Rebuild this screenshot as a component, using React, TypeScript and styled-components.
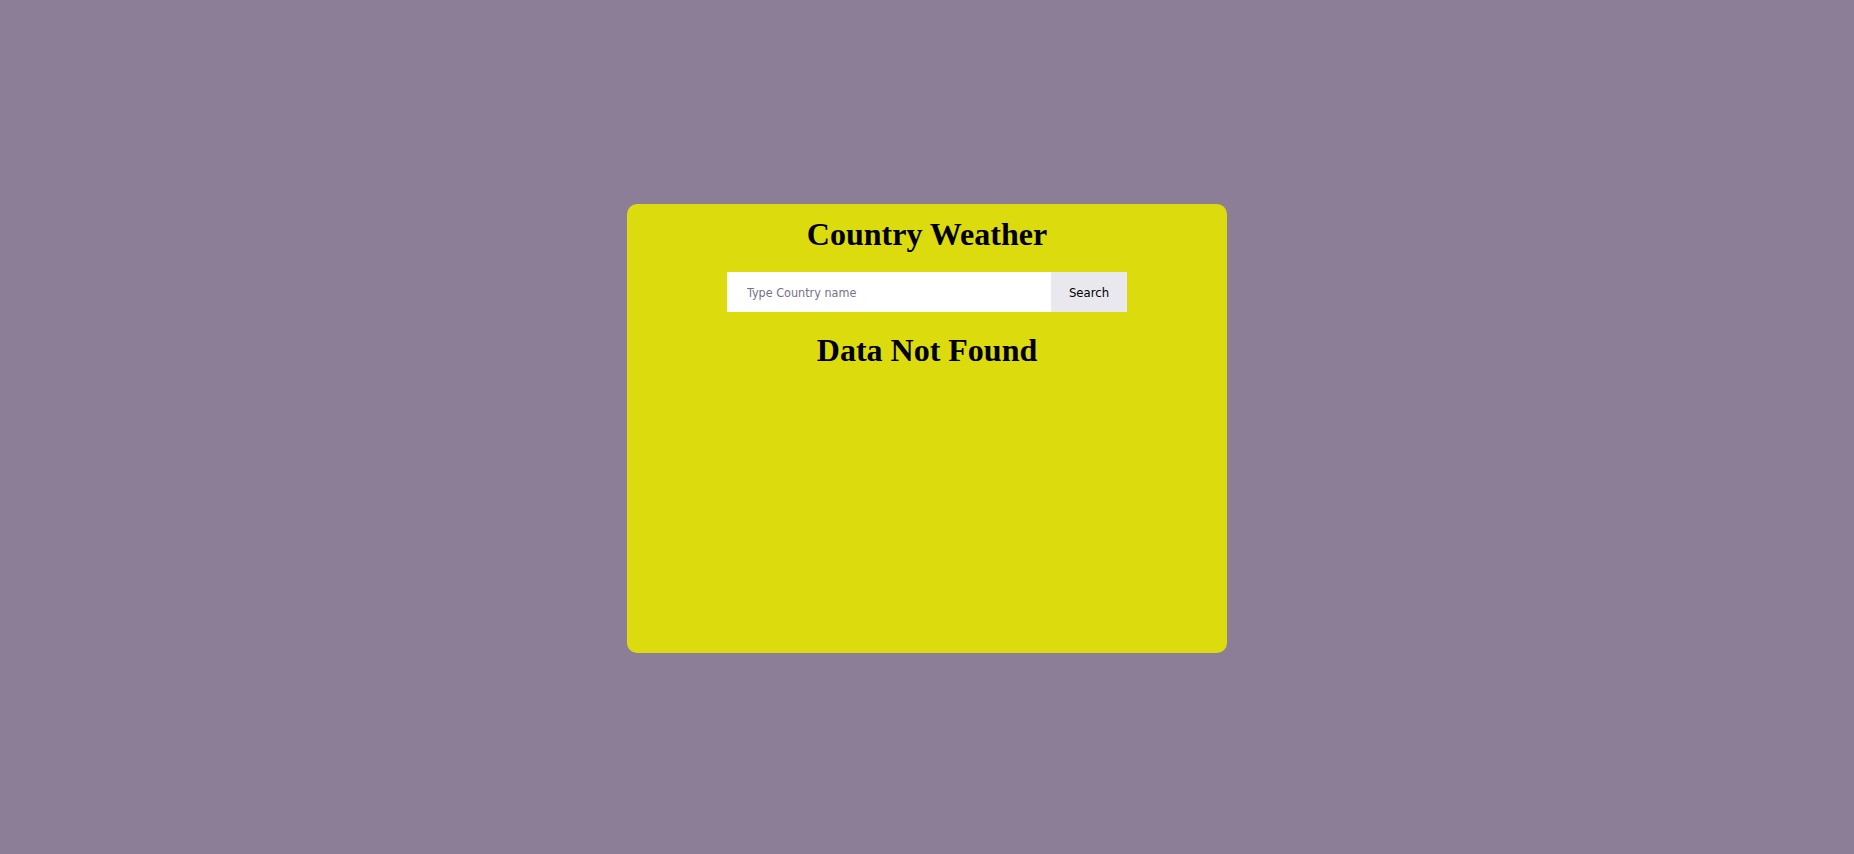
import React from "react";
import styled, { createGlobalStyle } from "styled-components";

const GlobalStyle = createGlobalStyle`
  html, body {
    margin: 0;
    padding: 0;
    background: #8b7e96;
  }
  body {
    font-family: "Liberation Serif", "Times New Roman", serif;
  }
`;

const Page = styled.div`
  min-height: 854px;
  display: flex;
  justify-content: center;
  align-items: flex-start;
  padding-top: 204px;
  box-sizing: border-box;
`;

const Card = styled.div`
  width: 600px;
  height: 449px;
  background: #dcdb0e;
  border-radius: 10px;
  box-sizing: border-box;
  padding-top: 12px;
  display: flex;
  flex-direction: column;
  align-items: center;
`;

const Heading = styled.h1<{ $top?: number; $bottom?: number }>`
  margin: ${(p) => p.$top ?? 0}px 0 ${(p) => p.$bottom ?? 0}px;
  font-family: "Liberation Serif", "Times New Roman", serif;
  font-size: 32px;
  font-weight: bold;
  line-height: 37px;
  color: #000;
  text-align: center;
`;

const SearchForm = styled.form`
  display: flex;
  width: 400px;
  height: 40px;
`;

const Input = styled.input`
  flex: 1;
  border: none;
  outline: none;
  margin: 0;
  padding: 1px 20px 0;
  background: #fff;
  font-family: "DejaVu Sans Condensed", "DejaVu Sans", Verdana, sans-serif;
  font-stretch: condensed;
  font-size: 12.5px;
  color: #000;
  &::placeholder {
    color: #7a7084;
  }
`;

const Button = styled.button`
  width: 76px;
  border: none;
  margin: 0;
  padding: 1px 0 0;
  background: #e8e8ee;
  font-family: "DejaVu Sans Condensed", "DejaVu Sans", Verdana, sans-serif;
  font-stretch: condensed;
  font-size: 13px;
  color: #000;
  cursor: pointer;
`;

export default function App() {
  return (
    <>
      <GlobalStyle />
      <Page>
        <Card>
          <Heading $bottom={19}>Country Weather</Heading>
          <SearchForm onSubmit={(e) => e.preventDefault()}>
            <Input type="text" placeholder="Type Country name" />
            <Button type="submit">Search</Button>
          </SearchForm>
          <Heading $top={20}>Data Not Found</Heading>
        </Card>
      </Page>
    </>
  );
}
